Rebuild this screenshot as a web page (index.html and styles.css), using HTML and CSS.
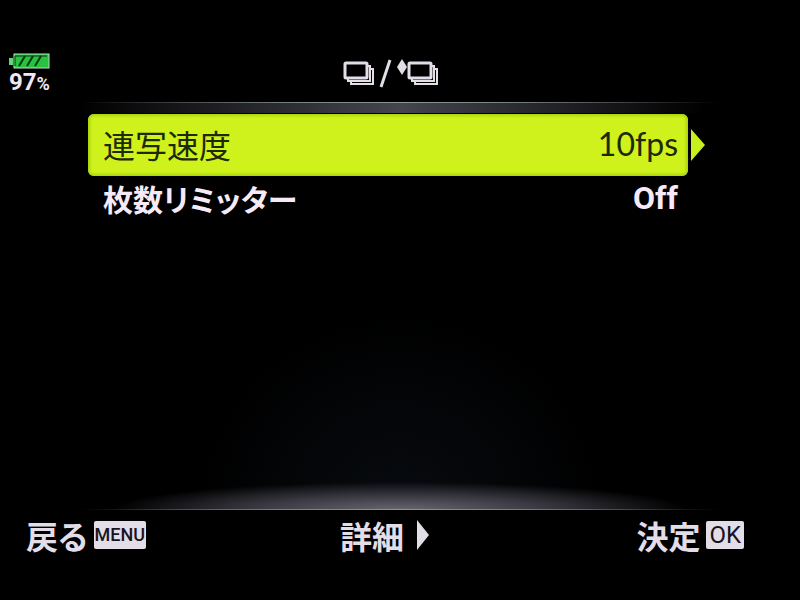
FILE: index.html
```
<!DOCTYPE html>
<html lang="ja">
<head>
    <meta charset="UTF-8">
    <meta name="viewport" content="width=device-width, initial-scale=1">
    <title>連写設定</title>
    <link rel="stylesheet" href="styles.css">
</head>
<body>
    <header class="top-bar">
        <div class="battery">
            <svg width="42" height="18" viewBox="0 0 42 18" aria-hidden="true">
                <rect x="1" y="6" width="4" height="7" fill="#5fd873"/>
                <rect x="6" y="2" width="35" height="14" fill="#26c240" stroke="#b9dfb9" stroke-width="1"/>
                <path d="M11 14L17 4M19 14L25 4M27 14L33 4" stroke="#06380f" stroke-width="2"/>
                <path d="M7 14V4H39" fill="none" stroke="#06380f" stroke-width="1"/>
            </svg>
            <div class="level">97<small>%</small></div>
        </div>
        <h1 class="title">
            <svg width="98" height="32" viewBox="0 0 98 32" role="img" aria-label="連写">
                <g id="stack" fill="none" stroke="#e2dde6" stroke-width="2">
                    <rect x="3" y="5" width="22" height="15" rx="1" stroke-width="3"/>
                    <path d="M26 8H28V23H6V21M29 11H31V26H9V24"/>
                </g>
                <path d="M48 2L39 29" stroke="#e2dde6" stroke-width="3"/>
                <path d="M60 1L65 9L60 17L55 9Z" fill="#e2dde6"/>
                <use href="#stack" x="64"/>
            </svg>
        </h1>
        <span></span>
    </header>

    <main class="menu">
        <button class="row selected" type="button">
            <span>連写速度</span>
            <span class="value">10fps</span>
            <svg class="next" width="16" height="34" viewBox="0 0 16 34" aria-hidden="true">
                <path d="M1 1L15 17L1 33Z" fill="#c8f01e"/>
            </svg>
        </button>
        <button class="row" type="button">
            <span>枚数リミッター</span>
            <span class="value">Off</span>
        </button>
    </main>

    <footer class="bottom-bar">
        <button class="action" type="button">戻る<span class="key">MENU</span></button>
        <button class="action detail" type="button">詳細
            <svg width="14" height="32" viewBox="0 0 14 32" aria-hidden="true">
                <path d="M1 1L13 16L1 31Z" fill="#e2dde6"/>
            </svg>
        </button>
        <button class="action" type="button">決定<span class="key ok">OK</span></button>
    </footer>
</body>
</html>
```

FILE: styles.css
```
* { box-sizing: border-box; }
body { margin: 0; min-height: 100vh; display: flex; flex-direction: column; background: #000; color: #e2dde6; font-family: "Noto Sans CJK JP", sans-serif; font-feature-settings: "palt"; }
button { margin: 0; border: none; background: none; color: inherit; font: inherit; font-feature-settings: inherit; cursor: pointer; }

/* top bar */
.top-bar { display: grid; grid-template-columns: 1fr auto 1fr; padding: 52px 26px 0 8px; height: 102px; }
.battery { display: flex; flex-direction: column; align-items: flex-start; }
.level { padding-left: 1px; font-family: Roboto, sans-serif; font-size: 24px; font-weight: bold; line-height: 24px; color: #f4e8f2; }
.level small { font-size: 18px; }
.title { margin: 0; padding-top: 6px; line-height: 0; }

/* menu */
.menu { position: relative; flex: 1; padding: 12px 14% 0 11%; background: radial-gradient(ellipse 36% 28px at 50% 100%, #68656f, #3a3942 50%, transparent), radial-gradient(ellipse 26% 200px at 50% 100%, #080b10, transparent), linear-gradient(90deg, transparent 10%, #46444e 50%, transparent 88%) top / 100% 11px no-repeat; }
.menu::before, .menu::after { content: ""; position: absolute; left: 10%; right: 10%; height: 1px; background: linear-gradient(90deg, transparent, #7b8588 35%, #8b9696 50%, #7b8588 65%, transparent); }
.menu::before { top: 0; }
.menu::after { bottom: 0; }
.row { position: relative; display: flex; justify-content: space-between; align-items: center; width: 100%; height: 44px; padding: 0 10px 0 15px; font-size: 30px; font-weight: 700; line-height: 48px; color: #f6eaf8; }
.row.selected { height: 62px; padding-bottom: 2px; border-radius: 6px; background: #d0f21c; box-shadow: inset 0 0 3px 2px #a9d50f; font-size: 32px; font-weight: 400; color: #1d2a05; }
.value { font-family: Roboto, sans-serif; font-size: 32px; }
.selected .value { font-family: Lato, sans-serif; font-feature-settings: normal; line-height: 54px; }
.next { position: absolute; left: 100%; top: 14px; margin-left: 2px; }

/* bottom bar */
.bottom-bar { display: grid; grid-template-columns: 1fr auto 1fr; height: 90px; padding: 0 56px 0 26px; }
.action { display: flex; align-items: center; gap: 6px; height: 50px; padding: 0; font-size: 32px; font-weight: 700; line-height: 48px; }
.action:last-child { justify-content: flex-end; }
.detail { gap: 12px; }
.key { height: 28px; padding: 0 1px; border-radius: 2px; background: #e2dde6; color: #17131f; font-family: Roboto, sans-serif; font-size: 18px; font-weight: 500; line-height: 28px; }
.key.ok { padding: 0 3px; font-size: 24px; font-weight: 400; }
```
